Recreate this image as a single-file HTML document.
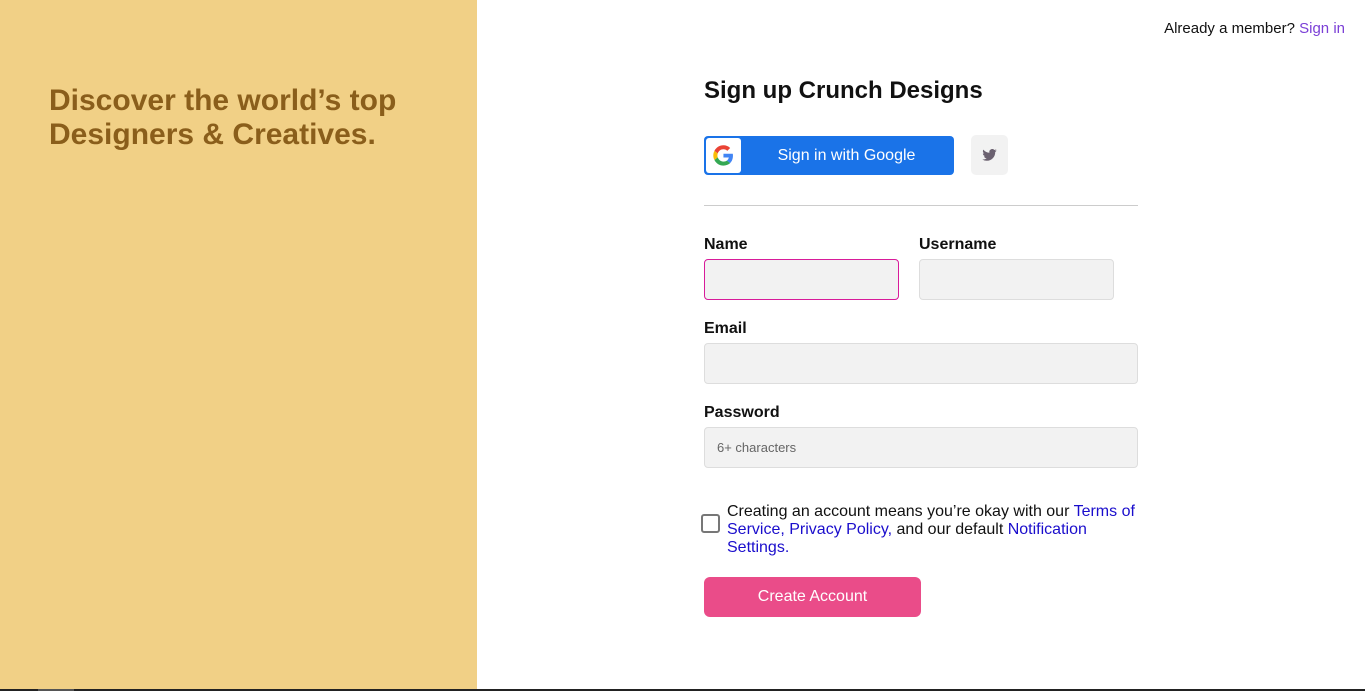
<!DOCTYPE html>
<html><head><style>
*{box-sizing:border-box}
body{margin:0;width:1365px;height:691px;overflow:hidden;font-family:"Liberation Sans",Arial,sans-serif;background:#fff;position:relative}
.left{position:absolute;left:0;top:0;width:477px;height:689px;background:#f1d086}
.left h1{position:absolute;left:49px;top:84px;margin:0;font-size:30px;line-height:34px;color:#8a5e1b;font-weight:bold}
.bar{position:absolute;left:0;top:689px;width:1365px;height:2px;background:#222}
.bar i{position:absolute;left:38px;top:0;width:36px;height:2px;background:#555}
.top{position:absolute;right:20px;top:20px;font-size:15px;color:#111}
.top a{color:#7b3fd6;text-decoration:none}
.t{position:absolute;font-size:16px;font-weight:bold;color:#111}
.in{position:absolute;background:#f2f2f2;border:1px solid #ddd;border-radius:4px;height:41px}
</style></head><body>
<div class="left"><h1>Discover the world’s top<br>Designers &amp; Creatives.</h1></div>
<div class="bar"><i></i></div>
<div class="top">Already a member? <a>Sign in</a></div>
<div style="position:absolute;left:704px;top:77px;font-size:24px;font-weight:bold;color:#111">Sign up Crunch Designs</div>
<div style="position:absolute;left:704px;top:136px;width:250px;height:39px;background:#1a73e8;border-radius:4px;color:#fff;font-size:16px;line-height:39px;text-align:center;padding-left:35px">Sign in with Google
<div style="position:absolute;left:2px;top:2px;width:35px;height:35px;background:#fff;border-radius:3px">
<svg width="35" height="35" viewBox="0 0 48 48"><g transform="translate(10 10) scale(0.58)"><path fill="#EA4335" d="M24 9.5c3.5 0 6.6 1.2 9.1 3.6l6.8-6.8C35.8 2.4 30.2 0 24 0 14.6 0 6.6 5.4 2.7 13.3l7.9 6.1C12.5 13.6 17.8 9.5 24 9.5z"/><path fill="#4285F4" d="M46.5 24.5c0-1.6-.1-3.1-.4-4.5H24v9h12.7c-.6 3-2.2 5.5-4.7 7.2l7.7 6c4.4-4.1 6.8-10.2 6.8-17.700z"/><path fill="#FBBC05" d="M10.5 28.6c-.5-1.4-.8-3-.8-4.6s.3-3.2.8-4.6l-7.9-6.1C1 16.5 0 20.1 0 24s1 7.5 2.7 10.7l7.8-6.1z"/><path fill="#34A853" d="M24 48c6.5 0 11.9-2.1 15.9-5.8l-7.7-6c-2.2 1.5-5 2.3-8.2 2.3-6.2 0-11.5-4.2-13.4-9.9l-7.9 6.1C6.6 42.6 14.6 48 24 48z"/></g></svg></div></div>
<div style="position:absolute;left:971px;top:135px;width:37px;height:40px;background:#f2f2f2;border-radius:5px">
<svg style="position:absolute;left:11px;top:14px" width="15" height="12" viewBox="0 0 24 20"><path fill="#6b6170" d="M24 2.4c-.9.4-1.8.7-2.8.8 1-.6 1.8-1.6 2.2-2.7-1 .6-2 1-3.1 1.2A4.9 4.9 0 0 0 11.9 6.2 14 14 0 0 1 1.7 1 4.9 4.9 0 0 0 3.2 7.6 4.9 4.9 0 0 1 1 7v.1a4.9 4.9 0 0 0 3.9 4.8c-.7.2-1.5.2-2.2.1a4.9 4.9 0 0 0 4.600 3.4A9.9 9.9 0 0 1 0 17.4 14 14 0 0 0 7.5 19.6c9.1 0 14-7.5 14-14v-.6c1-.7 1.8-1.600 2.5-2.6z"/></svg></div>
<div style="position:absolute;left:704px;top:205px;width:434px;height:1px;background:#ccc"></div>
<div class="t" style="left:704px;top:236px">Name</div>
<div class="t" style="left:919px;top:236px">Username</div>
<div class="in" style="left:704px;top:259px;width:195px;border-color:#d81b9a"></div>
<div class="in" style="left:919px;top:259px;width:195px"></div>
<div class="t" style="left:704px;top:320px">Email</div>
<div class="in" style="left:704px;top:343px;width:434px"></div>
<div class="t" style="left:704px;top:404px">Password</div>
<div class="in" style="left:704px;top:427px;width:434px;font-size:13px;color:#666;line-height:39px;padding-left:12px">6+ characters</div>
<div style="position:absolute;left:701px;top:514px;width:19px;height:19px;border:2px solid #777;border-radius:3px"></div>
<div style="position:absolute;left:727px;top:503px;width:415px;font-size:16px;line-height:18px;color:#111">Creating an account means you’re okay with our <span style="color:#1a0dcc">Terms of Service, Privacy Policy,</span> and our default <span style="color:#1a0dcc">Notification Settings.</span></div>
<div style="position:absolute;left:704px;top:577px;width:217px;height:40px;background:#ea4c89;border-radius:6px;color:#fff;font-size:16px;line-height:40px;text-align:center">Create Account</div>
</body></html>
